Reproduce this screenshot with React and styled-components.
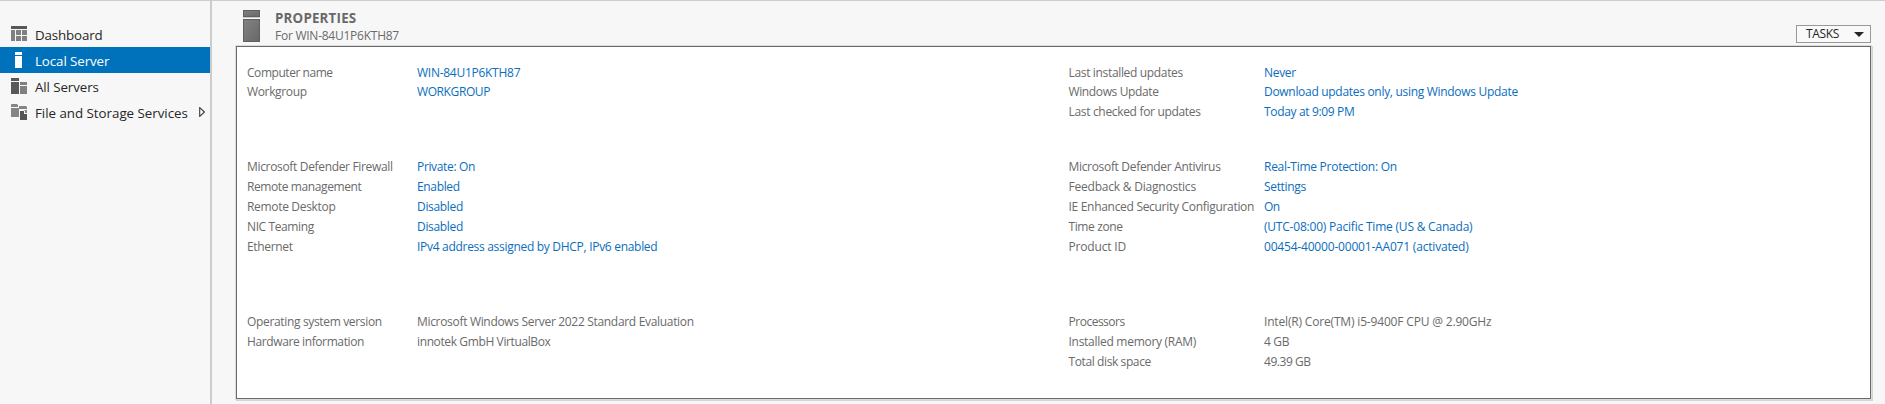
import React from "react";
import styled, { createGlobalStyle } from "styled-components";

const GlobalStyle = createGlobalStyle`
  * { box-sizing: border-box; }
  body {
    margin: 0;
    background: #f7f7f7;
    font-family: "Open Sans", "Noto Sans", sans-serif;
    font-size: 12px;
    color: #6a6a6a;
  }
`;

const Window = styled.div`
  display: flex;
  height: 404px;
  border-top: 1px solid #cdcdcd;
  overflow: hidden;
`;

const Sidebar = styled.nav`
  width: 212px;
  flex: none;
  padding-top: 20px;
  border-right: 2px solid #cccccc;
`;

const NavItem = styled.div`
  display: flex;
  align-items: center;
  height: 26px;
  padding: 0 5px 0 11px;
  color: ${(p) => (p.$active ? "#ffffff" : "#262626")};
  background: ${(p) => (p.$active ? "#0072bc" : "transparent")};
`;

const NavLabel = styled.span`
  flex: 1;
  margin-left: 8px;
  padding-top: 2px;
  font-size: 13.33px;
  line-height: 24px;
  white-space: nowrap;
  letter-spacing: ${(p) => p.$track}px;
`;

const NavIcon = styled.svg`
  flex: none;
  display: block;
`;

const Main = styled.main`
  flex: 1;
  min-width: 0;
  display: flex;
  flex-direction: column;
  padding: 0 14px 5px 24px;
`;

const Header = styled.header`
  display: flex;
  height: 45px;
  padding-left: 7px;
`;

const ServerIcon = styled.svg`
  flex: none;
  margin-top: 9px;
`;

const Heading = styled.div`
  flex: 1;
  margin-left: 15px;
  padding-top: 8px;
`;

const Title = styled.h1`
  margin: 0;
  font-size: 13.33px;
  font-weight: 700;
  line-height: 19px;
  letter-spacing: 0.2px;
  color: #696969;
`;

const Subtitle = styled.div`
  line-height: 16px;
  letter-spacing: -0.25px;
`;

const TasksButton = styled.button`
  display: flex;
  align-items: center;
  justify-content: space-between;
  width: 75px;
  height: 18px;
  margin: 24px 0 0;
  padding: 0 6px 0 9px;
  border: 1px solid #999999;
  background: #f9f9f9;
  color: #262626;
  font: inherit;
  line-height: 16px;
  letter-spacing: -0.35px;
`;

const Panel = styled.section`
  flex: 1;
  display: flex;
  border: 1px solid #6b6b6b;
  background: #ffffff;
  box-shadow: 0 0 0 1px #dcdcdc, 1px 1px 0 1px #d4d4d4;
  padding: 16px 0 0 10px;
`;

const Column = styled.div`
  width: 821.5px;
  flex: none;
`;

const Group = styled.dl`
  display: grid;
  grid-template-columns: ${(p) => p.$labelWidth}px 1fr;
  grid-template-rows: ${(p) => p.$firstRow || 20}px;
  grid-auto-rows: 20px;
  align-content: start;
  height: ${(p) => p.$height}px;
  margin: 0;
`;

const Label = styled.dt`
  line-height: 20px;
  white-space: nowrap;
  letter-spacing: ${(p) => p.$track}px;
`;

const Value = styled.dd`
  margin: 0;
  line-height: 20px;
  white-space: nowrap;
  letter-spacing: ${(p) => p.$track}px;
  color: ${(p) => (p.$link ? "#0a6ebd" : "inherit")};
`;

function DashboardIcon() {
  return (
    <NavIcon width="16" height="16" viewBox="0 0 16 16" shapeRendering="crispEdges">
      <path fill="#585858" d="M0 0h16v3H0z" />
      <path fill="#808080" d="M0 4h4v11H0zM5 4h5v5H5zM11 4h5v5h-5zM5 10h5v5H5zM11 10h5v5h-5z" />
    </NavIcon>
  );
}

function LocalServerIcon() {
  return (
    <NavIcon width="16" height="16" viewBox="0 0 16 16" shapeRendering="crispEdges">
      <path fill="#ffffff" d="M4 0h7v3H4zM4 4h7v12H4z" />
    </NavIcon>
  );
}

function AllServersIcon() {
  return (
    <NavIcon width="16" height="16" viewBox="0 0 16 16" shapeRendering="crispEdges">
      <path fill="#585858" d="M0 0h8v3H0zM0 4h8v12H0z" />
      <path fill="#808080" d="M9 4h7v3H9zM9 8h7v8H9z" />
    </NavIcon>
  );
}

function FileStorageIcon() {
  return (
    <NavIcon width="16" height="16" viewBox="0 0 16 16">
      <path fill="#858585" d="M0 .5L1 0h5l1 1v2H0zM0 4h8v9H0zM8 2h7l1 1v2H8z" />
      <path fill="#858585" d="M8 6h8v3l-3-3H8z" />
      <path fill="#545454" d="M9 7h4v3h3v6H9z" />
      <path fill="#858585" d="M14 6.6L16.4 9H14z" />
    </NavIcon>
  );
}

const navItems = [
  { label: "Dashboard", Icon: DashboardIcon, track: -0.14 },
  { label: "Local Server", Icon: LocalServerIcon, track: -0.09, active: true },
  { label: "All Servers", Icon: AllServersIcon, track: -0.09 },
  { label: "File and Storage Services", Icon: FileStorageIcon, track: -0.02, expandable: true },
];

// Each row: label, label tracking, value, value tracking.
const leftGroups = [
  {
    height: 94,
    firstRow: 19,
    link: true,
    rows: [
      ["Computer name", -0.45, "WIN-84U1P6KTH87", -0.27],
      ["Workgroup", -0.35, "WORKGROUP", -0.4],
    ],
  },
  {
    height: 155,
    link: true,
    rows: [
      ["Microsoft Defender Firewall", -0.33, "Private: On", -0.343],
      ["Remote management", -0.4, "Enabled", -0.35],
      ["Remote Desktop", -0.32, "Disabled", -0.319],
      ["NIC Teaming", -0.388, "Disabled", -0.319],
      ["Ethernet", -0.335, "IPv4 address assigned by DHCP, IPv6 enabled", -0.296],
    ],
  },
  {
    height: 80,
    rows: [
      ["Operating system version", -0.34, "Microsoft Windows Server 2022 Standard Evaluation", -0.317],
      ["Hardware information", -0.386, "innotek GmbH VirtualBox", -0.38],
    ],
  },
];

const rightGroups = [
  {
    height: 94,
    firstRow: 19,
    link: true,
    rows: [
      ["Last installed updates", -0.337, "Never", -0.3],
      ["Windows Update", -0.372, "Download updates only, using Windows Update", -0.3],
      ["Last checked for updates", -0.324, "Today at 9:09 PM", -0.34],
    ],
  },
  {
    height: 155,
    link: true,
    rows: [
      ["Microsoft Defender Antivirus", -0.32, "Real-Time Protection: On", -0.27],
      ["Feedback & Diagnostics", -0.21, "Settings", -0.33],
      ["IE Enhanced Security Configuration", -0.3, "On", -0.5],
      ["Time zone", -0.388, "(UTC-08:00) Pacific Time (US & Canada)", -0.21],
      ["Product ID", -0.171, "00454-40000-00001-AA071 (activated)", -0.19],
    ],
  },
  {
    height: 80,
    rows: [
      ["Processors", -0.488, "Intel(R) Core(TM) i5-9400F CPU @ 2.90GHz", -0.172],
      ["Installed memory (RAM)", -0.279, "4 GB", -0.35],
      ["Total disk space", -0.394, "49.39 GB", -0.45],
    ],
  },
];

function PropertyColumn({ groups, labelWidth }) {
  return (
    <Column>
      {groups.map((group) => (
        <Group
          key={group.rows[0][0]}
          $labelWidth={labelWidth}
          $height={group.height}
          $firstRow={group.firstRow}
        >
          {group.rows.map(([label, labelTrack, value, valueTrack]) => (
            <React.Fragment key={label}>
              <Label $track={labelTrack}>{label}</Label>
              <Value $track={valueTrack} $link={group.link}>{value}</Value>
            </React.Fragment>
          ))}
        </Group>
      ))}
    </Column>
  );
}

export default function App() {
  return (
    <>
      <GlobalStyle />
      <Window>
        <Sidebar>
          {navItems.map(({ label, Icon, track, active, expandable }) => (
            <NavItem key={label} $active={active}>
              <Icon />
              <NavLabel $track={track}>{label}</NavLabel>
              {expandable && (
                <NavIcon width="6" height="10" viewBox="0 0 6 10">
                  <path d="M.7 .6v8.8L5.4 5z" fill="#ffffff" stroke="#3c3c3c" strokeWidth="1.1" />
                </NavIcon>
              )}
            </NavItem>
          ))}
        </Sidebar>
        <Main>
          <Header>
            <ServerIcon width="17" height="33" viewBox="0 0 17 33">
              <defs>
                <linearGradient id="metal" x1="0" y1="0" x2="1" y2="1">
                  <stop offset="0" stopColor="#828282" />
                  <stop offset="1" stopColor="#686868" />
                </linearGradient>
              </defs>
              <path fill="#c9c9c9" d="M0 7h17v1H0z" />
              <rect x=".5" y=".5" width="16" height="6" fill="url(#metal)" stroke="#606060" />
              <rect x=".5" y="9.5" width="16" height="22" fill="url(#metal)" stroke="#606060" />
            </ServerIcon>
            <Heading>
              <Title>PROPERTIES</Title>
              <Subtitle>For WIN-84U1P6KTH87</Subtitle>
            </Heading>
            <TasksButton>
              TASKS
              <svg width="10" height="5" viewBox="0 0 10 5">
                <path d="M0 0h10L5 5z" fill="#262626" />
              </svg>
            </TasksButton>
          </Header>
          <Panel>
            <PropertyColumn groups={leftGroups} labelWidth={170} />
            <PropertyColumn groups={rightGroups} labelWidth={195.5} />
          </Panel>
        </Main>
      </Window>
    </>
  );
}
